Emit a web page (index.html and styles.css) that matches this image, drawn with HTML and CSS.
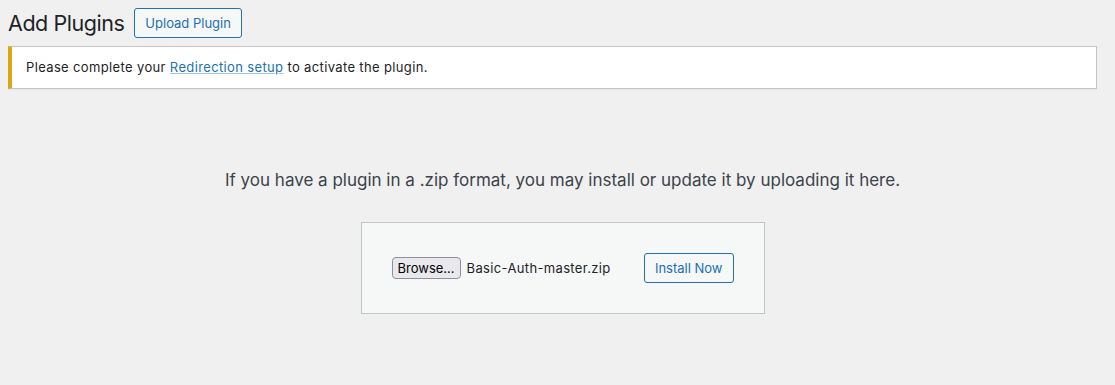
FILE: index.html
```html
<!DOCTYPE html>
<html lang="en">
<head>
    <meta charset="UTF-8">
    <title>Add Plugins</title>
    <link rel="stylesheet" href="styles.css">
</head>
<body>
    <div class="wrap">
        <div class="page-head">
            <h1 class="page-title">Add Plugins</h1>
            <button type="button" class="btn">Upload Plugin</button>
        </div>

        <div class="notice">
            <p>Please complete your <a href="#">Redirection setup</a> to activate the plugin.</p>
        </div>

        <div class="upload-plugin">
            <p class="install-help">If you have a plugin in a .zip format, you may install or update it by uploading it here.</p>
            <form class="upload-form">
                <span class="file-field">
                    <span class="browse">Browse...</span>
                    <span class="file-name">Basic-Auth-master.zip</span>
                </span>
                <button type="button" class="btn">Install Now</button>
            </form>
        </div>
    </div>
</body>
</html>
```

FILE: styles.css
```css
/* Page */
body {
    margin: 0;
    background-color: #f0f0f1;
    color: #1d2327;
    font-family: Inter, "Liberation Sans", Arial, sans-serif;
    font-size: 13px;
}

.wrap {
    padding: 8px 0 0 8px;
}

/* Heading row */
.page-head {
    display: flex;
    align-items: center;
    gap: 10px;
}

.page-title {
    margin: 0;
    font-size: 21.5px;
    font-weight: 400;
    line-height: 30px;
    letter-spacing: -0.45px;
}

.btn {
    min-height: 30px;
    padding: 0 10px;
    font-family: inherit;
    font-size: 13px;
    line-height: 28px;
    color: #2271b1;
    background-color: #f6f7f7;
    border: 1px solid #2271b1;
    border-radius: 3px;
    cursor: pointer;
}

/* Notice */
.notice {
    margin: 8px 18px 0 0;
    padding: 1px 12px;
    background-color: #fff;
    border: 1px solid #c3c4c7;
    border-left: 4px solid #dba617;
    box-shadow: 0 1px 1px rgba(0, 0, 0, 0.04);
}

.notice p {
    margin: 10px 0 11px 2px;
    line-height: 18px;
    letter-spacing: 0.36px;
}

.notice a {
    color: #2271b1;
    text-decoration: underline;
    text-decoration-color: #a6c4e0;
}

/* Upload area */
.upload-plugin {
    padding-left: 2px;
    text-align: center;
}

.install-help {
    margin: 80px 0 0;
    font-size: 17px;
    line-height: 22px;
    color: #3c434a;
}

.upload-form {
    display: inline-flex;
    align-items: center;
    justify-content: space-between;
    width: 342px;
    margin-top: 31px;
    padding: 30px 30px;
    background-color: #f6f7f7;
    border: 1px solid #c3c4c7;
    text-align: left;
}

.file-field {
    display: flex;
    align-items: center;
    gap: 6px;
}

.browse {
    padding: 2px 5px;
    font-size: 13px;
    color: #000;
    background-color: #e9e9ed;
    border: 1px solid #8f8f9d;
    border-radius: 4px;
}

.file-name {
    font-size: 13px;
    letter-spacing: 0.35px;
    color: #1d2327;
}
```
